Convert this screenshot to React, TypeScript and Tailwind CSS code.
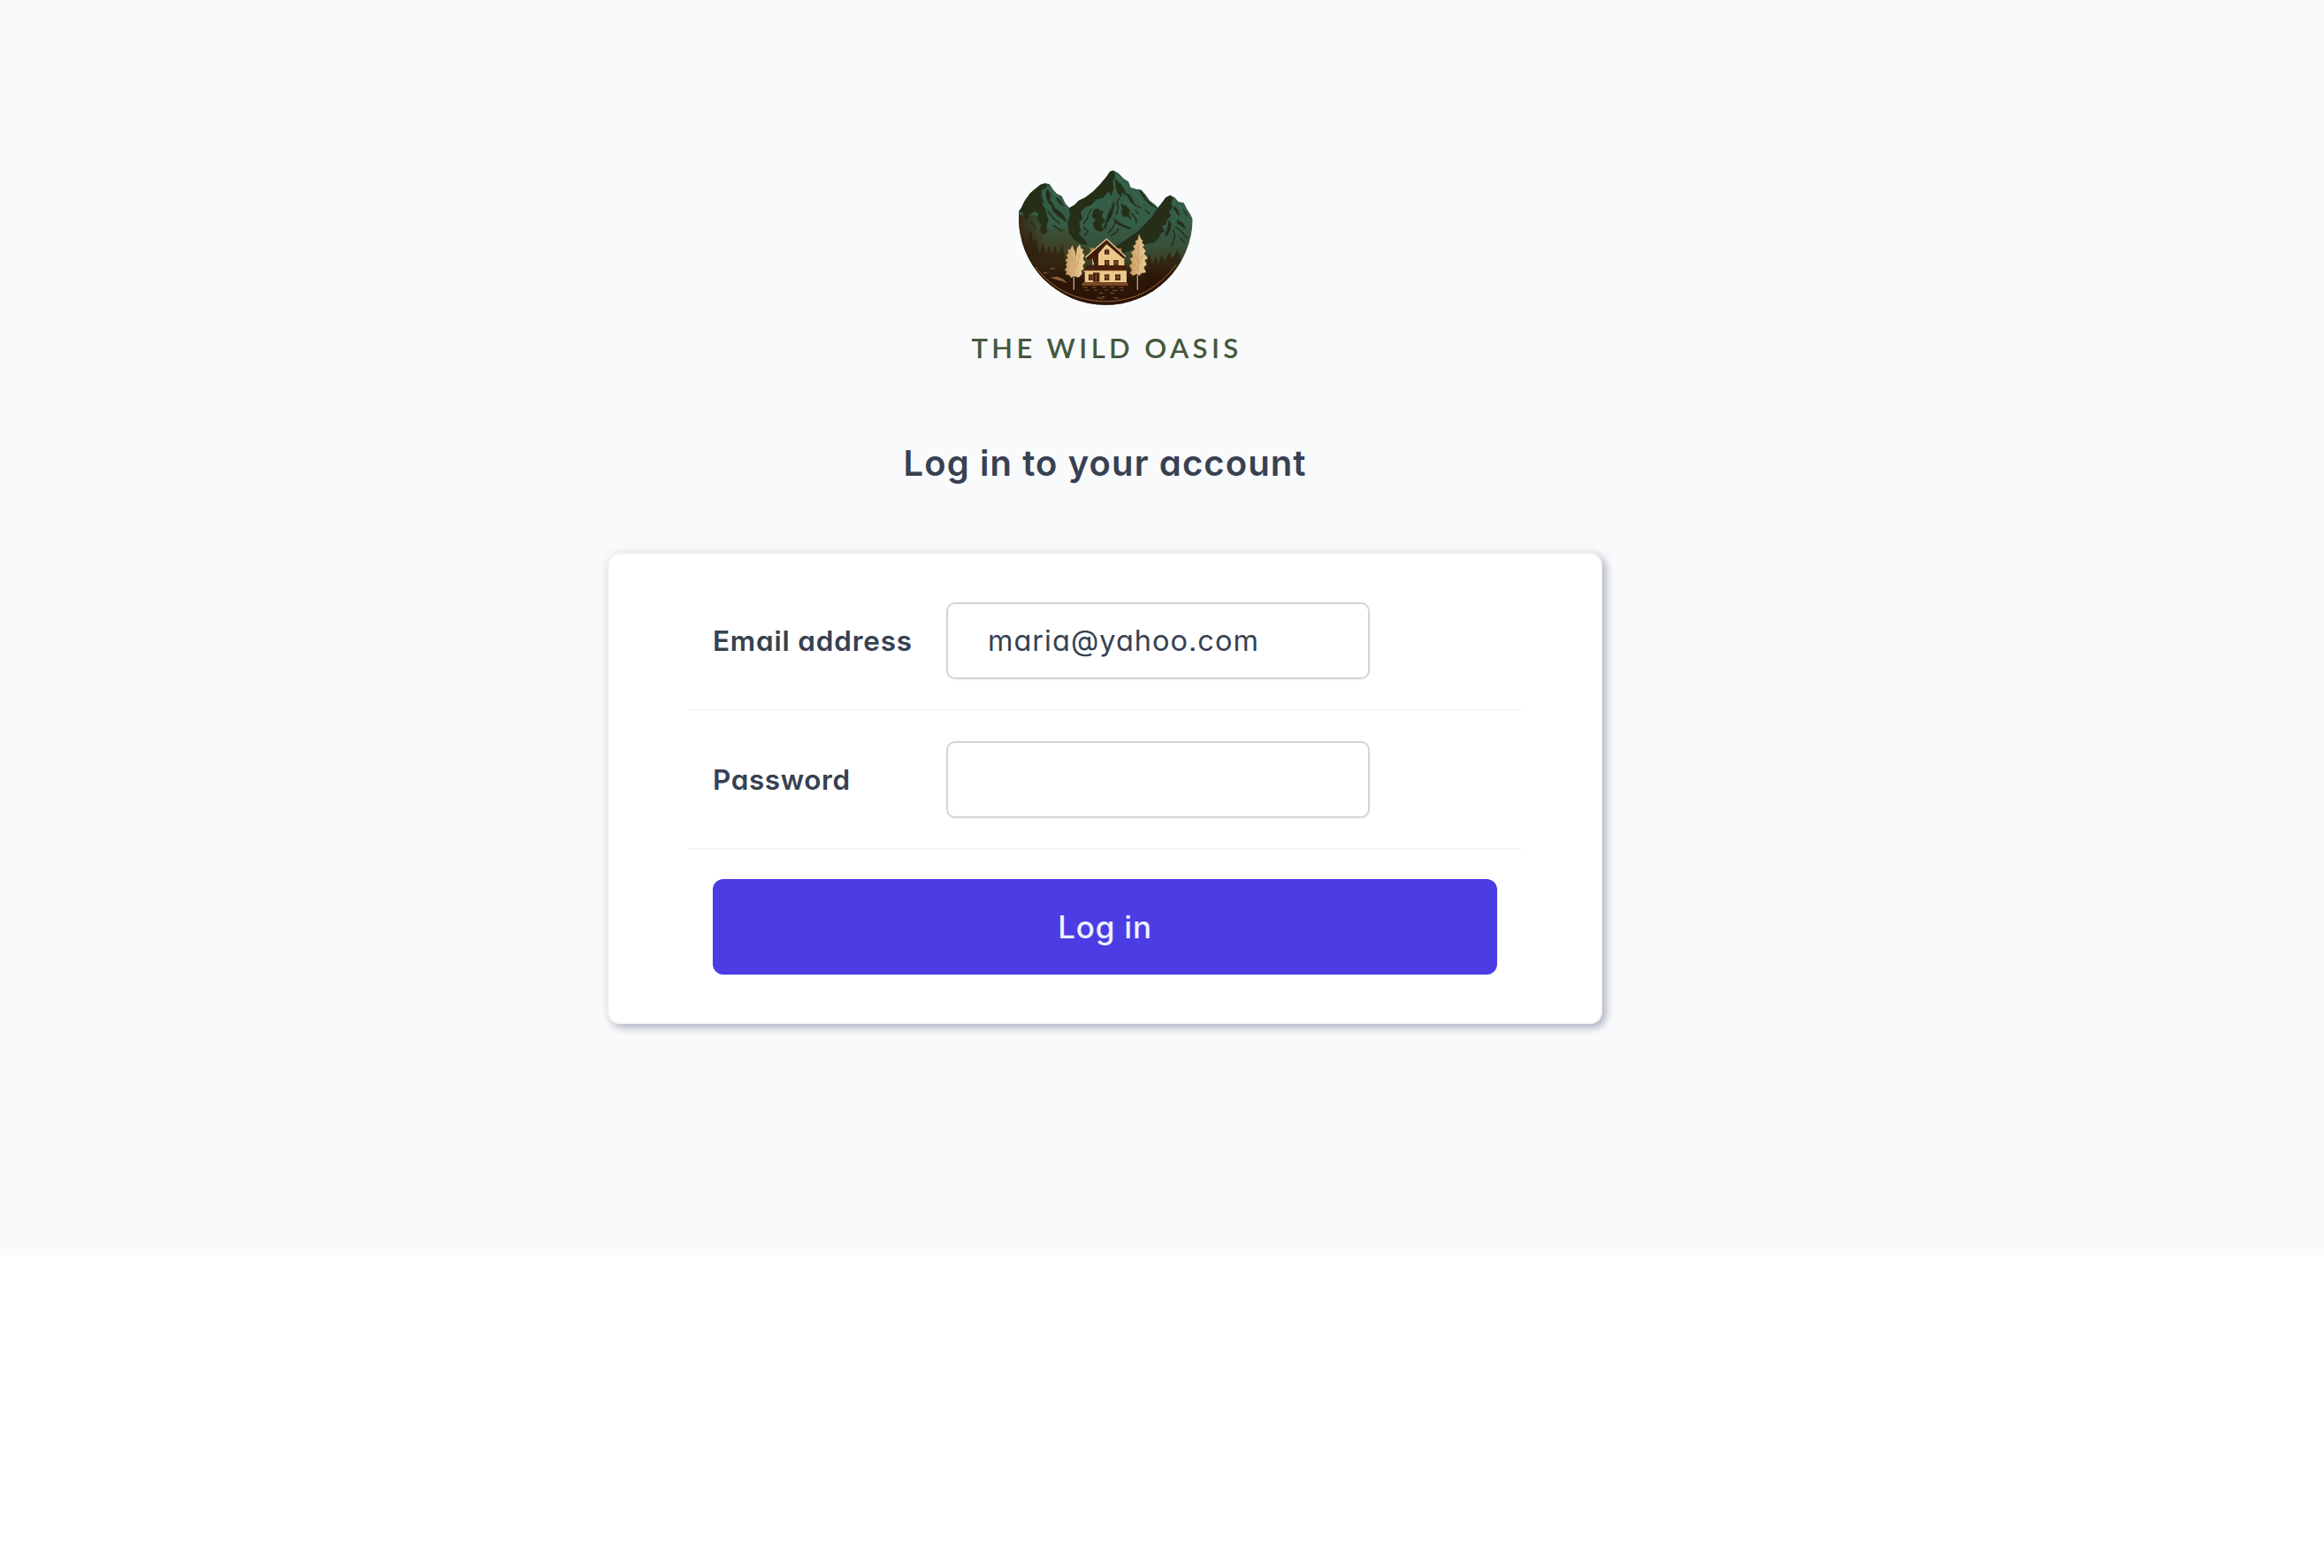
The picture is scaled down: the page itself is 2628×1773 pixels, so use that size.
function Logo({ className }: { className: string }) {
  return (
    <svg viewBox="0 0 660 525" className={className} role="img" aria-label="The Wild Oasis">
      <defs>
        <linearGradient id="land" x1="0" y1="38" x2="0" y2="491" gradientUnits="userSpaceOnUse">
          <stop offset="0" stopColor="#325c48" />
          <stop offset="0.4" stopColor="#355d48" />
          <stop offset="0.56" stopColor="#37503a" />
          <stop offset="0.72" stopColor="#3d3a1c" />
          <stop offset="0.86" stopColor="#351b08" />
          <stop offset="1" stopColor="#2a1206" />
        </linearGradient>
        <linearGradient id="edge" x1="30" y1="0" x2="130" y2="0" gradientUnits="userSpaceOnUse">
          <stop offset="0" stopColor="#3a1a08" />
          <stop offset="1" stopColor="#3a1a08" stopOpacity="0" />
        </linearGradient>
        <linearGradient id="haze" x1="0" y1="190" x2="0" y2="300" gradientUnits="userSpaceOnUse">
          <stop offset="0" stopColor="#414524" stopOpacity="0" />
          <stop offset="1" stopColor="#414022" />
        </linearGradient>
        <linearGradient id="ground" x1="0" y1="350" x2="0" y2="410" gradientUnits="userSpaceOnUse">
          <stop offset="0" stopColor="#2b1407" stopOpacity="0" />
          <stop offset="1" stopColor="#2b1407" stopOpacity="0.85" />
        </linearGradient>
        <linearGradient id="tree" x1="0" y1="0" x2="1" y2="0">
          <stop offset="0" stopColor="#c99a62" />
          <stop offset="1" stopColor="#ecd09a" />
        </linearGradient>
        <clipPath id="bowl">
          <path d="M36 178L45 165L55 143L75 115L95 98L110 86L125 82L140 84L152 102L165 117L182 125L194 150L208 165L225 155L240 140L262 130L290 108L315 82L335 58L345 42L358 38L375 48L392 66L408 76L416 96L434 101L452 104L468 122L480 140L500 155L508 165L520 150L535 130L550 122L565 130L578 145L596 148L606 168L618 187L626 203A295 295 0 0 1 36 196Z" />
        </clipPath>
      </defs>
      <g clipPath="url(#bowl)">
        <rect width="660" height="525" fill="url(#land)" />
        <path d="M30 180L60 190L100 210L140 240L200 230L240 290L270 300L260 400L100 420L30 300Z" fill="url(#haze)" opacity=".8" />
        <rect y="190" width="190" height="260" fill="url(#edge)" opacity=".85" />
        <g fill="#252e17" stroke="#252e17" strokeWidth="2" strokeLinejoin="round">
          <path d="M36 178L45 165L55 143L75 115L95 98L110 86L125 82L132 88L126 98L114 104L111 124L119 143L115 154L126 168L130 190L136 206L130 222L132 246L118 254L108 238L113 222L100 205L105 184L90 176L74 186L63 206L54 196L50 178Z" />
          <path d="M132 102L143 118L141 138L156 158L152 162L136 146L128 124Z" />
          <path d="M148 154L168 174L186 188L196 204L196 214L184 202L166 190L151 174Z" />
          <path d="M162 128L177 140L188 158L182 156L168 142Z" />
          <path d="M208 165L225 155L240 140L262 130L290 108L315 82L335 58L345 42L358 38L362 58L354 74L357 99L350 122L340 108L322 130L300 135L282 155L262 162L245 179L251 201L240 216L245 243L238 253L260 274L268 290L244 286L222 269L207 250L203 213L211 190Z" />
          <path d="M291 172L305 168L311 176L322 176L316 194L329 209L315 224L324 240L310 245L293 235L289 216L298 206L285 194Z" />
          <path d="M362 68L380 84L394 103L400 124L388 112L382 128L370 110Z" />
          <path d="M342 180L354 160L356 145L361 156L350 194L334 220L331 240L326 230Z" />
          <path d="M383 153L400 160L413 174L409 188L419 204L407 195L391 194L385 180L389 169Z" />
          <path d="M360 201L371 211L394 225L420 235L408 236L378 224L362 213Z" />
          <path d="M402 114L413 123L426 143L420 144L408 133Z" />
          <path d="M443 103L455 112L468 134L490 155L504 166L480 152L465 139L454 121Z" />
          <path d="M508 165L520 150L535 130L550 122L558 132L552 148L556 165L545 179L552 191L540 204L534 221L520 226L530 246L518 250L508 270L494 282L466 288L440 300L380 320L355 304L384 284L418 262L440 246L466 219L488 196Z" />
          <path d="M545 208L554 220L547 244L539 260L532 257L541 234Z" />
          <path d="M564 160L576 174L581 192L573 184L562 168Z" />
          <path d="M573 206L592 217L604 236L588 227L574 216Z" />
          <path d="M592 169L603 181L610 202L599 189Z" />
        </g>
        <g fill="none" stroke="#252e17" strokeLinecap="round" strokeWidth="4.5">
          <path d="M135 176L151 198L172 216M154 225L183 244M257 217L270 199L271 185L282 169M257 232L271 246L260 258M376 132L369 149L374 163L367 187M339 251L352 237L363 216M349 260L366 249L374 236M416 142L434 158L449 164M426 171L441 185M418 184L430 196L436 214M465 173L480 184M78 212L94 235M568 230L591 248L607 268M585 268L599 282M560 240L566 262L554 294" />
        </g>
        <g fill="none" stroke="#3f6e56" strokeLinecap="round" strokeWidth="4" opacity=".8">
          <path d="M146 96L158 118L172 132M122 112L128 132M300 146L276 168L262 200M366 54L388 78L404 98M424 110L440 128L456 150M344 140L340 158M562 142L568 156M580 156L594 178L612 208M396 144L420 162L440 196" />
        </g>
        <g fill="#2c1a09">
          <path d="M36 310L53 260L60 290L78 240L86 286L94 268L106 318L118 282L128 320L139 294L148 320L160 294L169 325L184 289L198 355L210 420L80 410Z" opacity=".65" />
          <path d="M462 390L478 318L488 356L501 330L510 355L521 322L531 345L548 315L557 340L575 306L588 350L620 300L620 400L500 470Z" opacity=".65" />
        </g>
        <rect y="350" width="660" height="150" fill="url(#ground)" />
        <path d="M92 365Q177 479 331 483Q477 481 570 358" fill="none" stroke="#9d673b" strokeWidth="3" />
        <path d="M142 401L168 398L187 407L202 421L181 413L164 409Z" fill="#8d603a" />
        <path d="M144 371H158M120 386H133M302 470L322 473M358 470L374 472M318 466L328 468" stroke="#8f663c" strokeWidth="3" />
      </g>
      <g fill="url(#tree)">
        <path d="M218 291L223 305L227 313L230 330L233 302L243 289L247 303L255 306L252 318L259 325L254 338L262 350L253 360L257 373L248 378L251 389L239 401L224 397L214 402L207 393L195 391L199 381L191 376L200 366L195 358L201 350L193 343L203 335L198 324L206 318L201 308L211 306Z" />
        <path d="M444 253L450 270L457 276L454 284L463 291L456 298L467 311L461 320L474 336L463 342L470 358L460 366L468 384L452 387L446 395L436 389L424 395L413 386L420 376L411 361L421 352L413 338L424 330L417 316L430 306L423 294L434 288L431 279L440 272Z" />
      </g>
      <path d="M228 325L223 385M216 330L221 350M244 320L231 365M443 290L440 382M429 320L439 345M459 325L443 355M426 354L439 370" fill="none" stroke="#b98549" strokeWidth="2" opacity=".75" />
      <path d="M223 400V443M439 392V443" stroke="#b8a48c" strokeWidth="4" />
      <path d="M279 300H291V322H279ZM371 302H385V319H371Z" fill="#a97a43" />
      <path d="M271 338L335 277L394 336V362H402V418H260V377H286V334Z" fill="#ebc78c" />
      <path d="M264 333L334 270L398 329L391 337L334 288L308 318L306 360L402 361L402 379L255 378L270 363L292 358L286 335L270 342Z" fill="#3d1c0b" />
      <path d="M306 322L318 308V360H306Z" fill="#ebc78c" />
      <path d="M262 334L334 271L399 331" fill="none" stroke="#f2d296" strokeWidth="4" />
      <path d="M284 361H388L400 378H259Z" fill="#461f0d" />
      <path d="M254 379H402" stroke="#dcae6d" strokeWidth="3" />
      <path d="M327 309Q335 300 343 309V323H327ZM327 342H343V360H327ZM358 342H374V360H358ZM297 344H306V358H297ZM273 391H287V411H273ZM327 391H343V411H327ZM363 391H381V411H363ZM288 385H310V416H288Z" fill="#48240f" />
      <path d="M335 305V323M335 342V360M366 342V360M335 391V411M372 391V411M280 391V411M327 351H343M358 351H374M327 401H343M363 401H381M298 386V416" stroke="#b98954" strokeWidth="1.5" />
      <path d="M253 418H404L409 429H249Z" fill="#7a4922" />
      <path d="M254 435H270M284 435H299M318 434H334M346 434H361M376 435H391M260 444H275M291 445H302M328 444H337M355 445H371M381 444H394M309 454H321M347 454H360" stroke="#8f663f" strokeWidth="2.5" />
    </svg>
  );
}

export default function App() {
  return (
    <main className="h-[1773px] bg-white font-['Inter',sans-serif] text-[#374151] [font-feature-settings:'cv11','ss07']">
      <section className="flex h-[1419px] bg-[#f9fafb] pl-[687px]">
        <div className="flex w-[1125px] flex-col items-center pt-[180px]">
          <Logo className="h-[175px] w-[220px] shrink-0" />
          <p className="mt-4 -mr-1 font-['Lato',sans-serif] text-[31px] leading-[44px] font-semibold tracking-[4.4px] text-[#44583c]">THE WILD OASIS</p>
          <h1 className="mt-[79px] text-[40px] leading-[60px] font-semibold tracking-[1.1px]">Log in to your account</h1>
          <form className="mt-[71px] h-[533px] w-[1125px] shrink-0 rounded-[14px] border-2 border-[#f3f4f6] bg-white px-[90px] pt-5 shadow-[0_0_16px_rgba(0,0,0,0.05),4px_4px_10px_rgba(30,41,89,0.32)]">
            <label className="flex h-[157px] items-center border-b-2 border-[#f3f4f6] px-[27px]">
              <span className="w-[264px] text-[31.5px] font-semibold tracking-[0.8px]">Email address</span>
              <input defaultValue="maria@yahoo.com" className="h-[87px] w-[479px] rounded-[10px] border-2 border-[#d1d5db] px-[45px] text-[32.5px] tracking-[1px] shadow-xs" />
            </label>
            <label className="flex h-[157px] items-center border-b-2 border-[#f3f4f6] px-[27px]">
              <span className="w-[264px] text-[31.5px] font-semibold tracking-[0.6px]">Password</span>
              <input type="password" className="h-[87px] w-[479px] rounded-[10px] border-2 border-[#d1d5db] px-[45px] shadow-xs" />
            </label>
            <div className="px-[27px] pt-[33px]">
              <button type="button" className="h-[108px] w-full rounded-[12px] bg-[#4b3de3] text-[35px] font-medium tracking-[0.8px] text-[#eef2ff]">Log in</button>
            </div>
          </form>
        </div>
      </section>
    </main>
  );
}
